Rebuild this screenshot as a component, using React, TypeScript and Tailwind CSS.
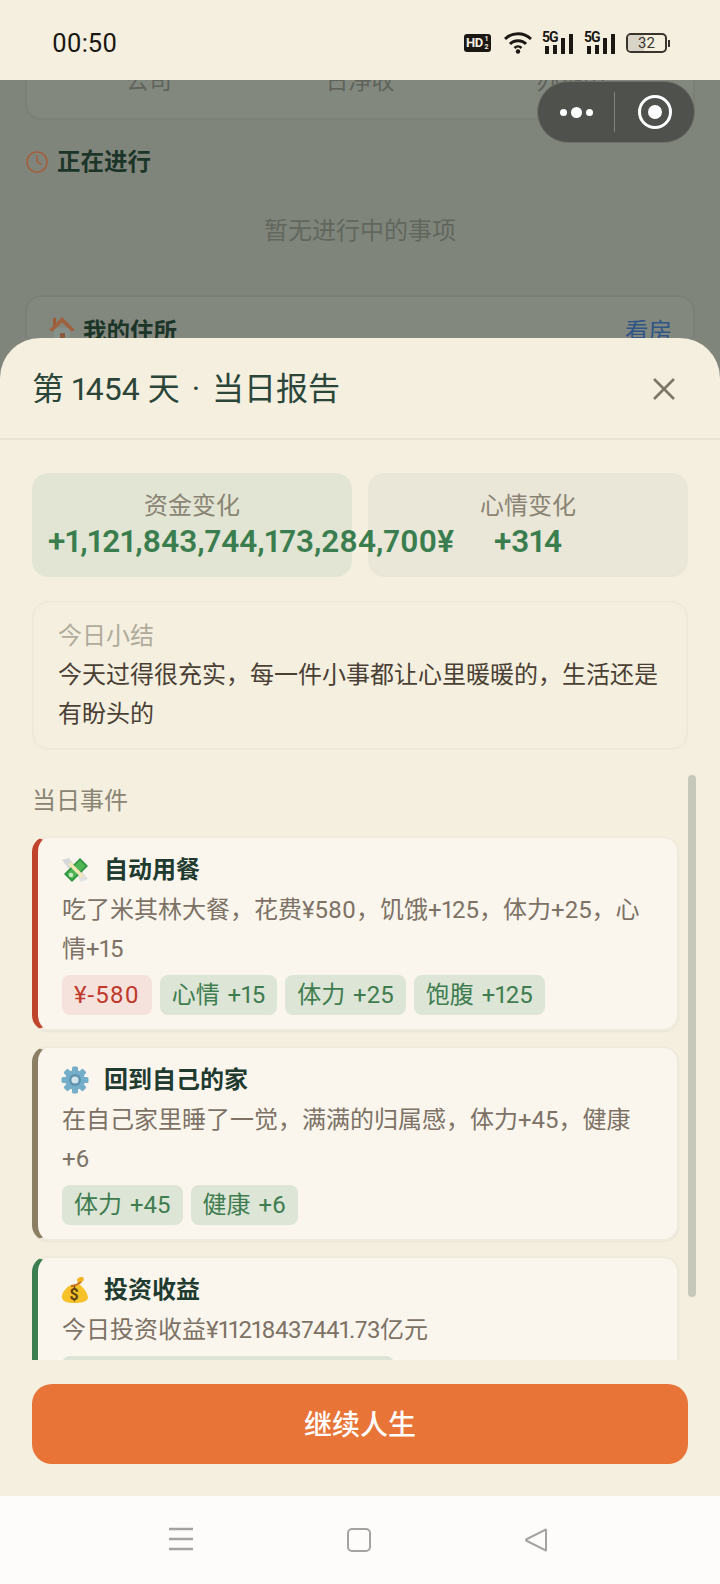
import { Clock } from 'lucide-react'

type Tag = { label: string; tone: 'good' | 'bad'; extra?: string }

interface EventItem {
  icon: React.ReactNode
  title: string
  desc: React.ReactNode
  bar: string
  tags: Tag[]
}

function MoneyWings() {
  return (
    <svg viewBox="0 0 28 28" className="w-[28px] h-[28px]">
      <path d="M1 4 L8 2 L14 10 L8 13 Z" fill="#d5d9d9" />
      <path d="M15 18 L21 15 L27 23 L20 26 Z" fill="#dfe2e2" />
      <path d="M19 2 L27 10 L11 26 L3 18 Z" fill="#2f9440" />
      <path d="M19 4.5 L24.5 10 L11 23.5 L5.5 18 Z" fill="#4fb455" />
      <path d="M7 8.5 L9.5 6 L23 19.5 L20.5 22 Z" fill="#f3e7b8" />
      <circle cx="10" cy="19" r="2.2" fill="#c9ecc4" />
    </svg>
  )
}

function Gear() {
  return (
    <svg viewBox="0 0 28 28" className="w-[28px] h-[28px]">
      <g fill="#75aeca">
        <circle cx="14" cy="14" r="10" />
        <rect x="11" y="0.5" width="6" height="27" rx="1.5" />
        <rect x="11" y="0.5" width="6" height="27" rx="1.5" transform="rotate(45 14 14)" />
        <rect x="11" y="0.5" width="6" height="27" rx="1.5" transform="rotate(90 14 14)" />
        <rect x="11" y="0.5" width="6" height="27" rx="1.5" transform="rotate(135 14 14)" />
      </g>
      <circle cx="14" cy="14" r="6" fill="#5d93ae" />
      <circle cx="14" cy="14" r="3.6" fill="#d5e4ea" />
    </svg>
  )
}

function MoneyBag() {
  return (
    <svg viewBox="0 0 28 28" className="w-[28px] h-[28px]">
      <path d="M10 9 C4 12 0 18 1 22 C2 26 7 27 13 27 C20 27 26 26 27 22 C27 17 22 11 18 8 Z" fill="#f7c12a" />
      <path d="M17 8 L16 3 L19 1 L22 1 L23 4 L20 7 Z" fill="#f2b51e" />
      <path d="M10 10 C13 10 17 8 20 6" fill="none" stroke="#c9701c" strokeWidth="2" />
      <text x="8.5" y="24" fontSize="16" fontWeight="700" fill="#5f4312" fontFamily="Roboto, sans-serif">$</text>
    </svg>
  )
}

function House() {
  return (
    <svg viewBox="0 0 28 28" className="w-[28px] h-[28px]">
      <rect x="6" y="12" width="16" height="15" fill="#85918a" />
      <rect x="5" y="2" width="3" height="7" fill="#9c5a35" />
      <path d="M14 1 L27 14 L23.5 15.5 L14 6.5 L4.5 15.5 L1 14 Z" fill="#a0613f" />
      <rect x="12" y="17" width="5" height="10" fill="#8a5a3a" />
    </svg>
  )
}

function Signal() {
  return (
    <div className="relative w-[32px] h-[22px]">
      <span className="absolute left-0 -top-[3px] text-[14px] leading-[16px] font-bold text-[#1b1712] tracking-[-1px]">5G</span>
      <div className="absolute left-[3px] bottom-0 flex items-end gap-[4px]">
        <div className="w-[4px] h-[8px] bg-[#1b1712]" />
        <div className="w-[4px] h-[9px] bg-[#1b1712]" />
        <div className="w-[4px] h-[16px] bg-[#1b1712]" />
        <div className="w-[4px] h-[20px] bg-[#1b1712]" />
      </div>
    </div>
  )
}

const events: EventItem[] = [
  {
    icon: <MoneyWings />,
    title: '自动用餐',
    desc: '吃了米其林大餐，花费¥580，饥饿+125，体力+25，心情+15',
    bar: 'border-l-[#c0432b]',
    tags: [
      { label: '¥-580', tone: 'bad', extra: 'tracking-[1px]' },
      { label: '心情 +15', tone: 'good' },
      { label: '体力 +25', tone: 'good' },
      { label: '饱腹 +125', tone: 'good' },
    ],
  },
  {
    icon: <Gear />,
    title: '回到自己的家',
    desc: '在自己家里睡了一觉，满满的归属感，体力+45，健康+6',
    bar: 'border-l-[#8a7f62]',
    tags: [
      { label: '体力 +45', tone: 'good' },
      { label: '健康 +6', tone: 'good' },
    ],
  },
  {
    icon: <MoneyBag />,
    title: '投资收益',
    desc: (
      <>
        今日投资收益¥<span className="tracking-[-0.45px]">11218437441.73</span>亿元
      </>
    ),
    bar: 'border-l-[#3a7d4f]',
    tags: [{ label: '¥+1,121,843,744,173,284,700', tone: 'good', extra: 'tracking-[0.4px]' }],
  },
]

function EventCard({ item }: { item: EventItem }) {
  return (
    <div className={`w-[647px] rounded-[16px] border-2 border-[#efeadc] border-l-[6px] bg-[#faf6ee] shadow-[0_1px_2px_rgba(0,0,0,0.05)] pl-[24px] pr-[24px] py-[14px] ${item.bar}`}>
      <div className="flex items-center h-[36px]">
        <div className="w-[43px] -ml-[1px]">{item.icon}</div>
        <h3 className="text-[24px] leading-[36px] font-bold text-[#1f3a2e]">{item.title}</h3>
      </div>
      <p className="mt-[3px] text-[24px] leading-[39px] text-[#7d7265]">{item.desc}</p>
      <div className="mt-[6px] flex gap-[8px]">
        {item.tags.map((t) => (
          <span
            key={t.label}
            className={`h-[40px] px-[12px] rounded-[8px] text-[24px] leading-[40px] [word-spacing:2px] whitespace-nowrap ${
              t.tone === 'bad' ? 'bg-[#f5e2dc] text-[#c0392b]' : 'bg-[#dde5d6] text-[#3f7d50]'
            } ${t.extra ?? ''}`}
          >
            {t.label}
          </span>
        ))}
      </div>
    </div>
  )
}

export default function App() {
  return (
    <div className="w-[720px] h-[1584px] relative overflow-hidden bg-[#80857b] proportional-nums font-[Roboto,'Noto_Sans_CJK_SC',sans-serif]">
      {/* Status bar */}
      <div className="h-[80px] pt-[6px] flex items-center justify-between pl-[52px] pr-[50px] bg-[#f5efe0]">
        <span className="text-[25.5px] leading-[30px] text-[#1b1712]">00:50</span>
        <div className="flex items-center">
          <div className="w-[27px] h-[18px] rounded-[3px] bg-[#1b1712] text-[#f5efe0] text-[13px] leading-[18px] font-bold pl-[2px] tracking-[-0.5px] flex">
            HD<span className="text-[7px] leading-[8px] ml-[1px] mt-[1px] w-[5px] text-center">1 2</span>
          </div>
          <svg viewBox="0 0 28 22" className="w-[28px] h-[22px] ml-[13px]">
            <path d="M1 7 C8 0 20 0 27 7" fill="none" stroke="#1b1712" strokeWidth="3" />
            <path d="M6 12 C10 7.5 18 7.5 22 12" fill="none" stroke="#1b1712" strokeWidth="3" />
            <path d="M10.5 16 C12.5 14 15.5 14 17.5 16" fill="none" stroke="#1b1712" strokeWidth="2.5" />
            <circle cx="14" cy="19.5" r="2.2" fill="#1b1712" />
          </svg>
          <div className="ml-[10px]">
            <Signal />
          </div>
          <div className="ml-[10px]">
            <Signal />
          </div>
          <div className="ml-[10px] flex items-center">
            <div className="relative w-[41px] h-[20px] rounded-[5px] border-2 border-[#3a352c] overflow-hidden">
              <div className="absolute left-0 top-0 bottom-0 w-[16px] bg-[#d9d4c8]" />
              <span className="absolute inset-0 text-center text-[15px] leading-[17px] text-[#3a352c]">32</span>
            </div>
            <div className="w-[2px] h-[7px] ml-[1px] bg-[#3a352c]" />
          </div>
        </div>
      </div>

      {/* Dimmed page behind the sheet */}
      <div className="h-[258px] overflow-hidden">
        <div className="-mt-[40px] mx-[25px] h-[80px] rounded-b-[16px] bg-[#83887e] border-2 border-[#7b8077] px-[16px] pt-[22px] grid grid-cols-3 text-center text-[23px] leading-[36px] text-[#5f635a]">
          <span>公司</span>
          <span>日净收</span>
          <span>办证中</span>
        </div>
        <div className="mt-[24px] mx-[25px] flex items-center h-[36px]">
          <Clock size={24} strokeWidth={1.6} className="text-[#a3603f]" />
          <span className="ml-[8px] text-[23.5px] leading-[36px] font-bold text-[#1c3529]">正在进行</span>
        </div>
        <p className="mt-[33px] text-center text-[24px] leading-[36px] text-[#62675e]">暂无进行中的事项</p>
        <div className="mt-[46px] mx-[25px] h-[80px] rounded-[16px] bg-[#83887e] border-2 border-[#7b8077] px-[21px] pt-[17px] flex justify-between text-[23.5px] leading-[36px]">
          <div className="flex items-start">
            <div className="mt-[2px] mr-[7px]">
              <House />
            </div>
            <span className="font-bold text-[#1c3529]">我的住所</span>
          </div>
          <span className="text-[#2f5588]">看房</span>
        </div>
      </div>

      {/* Report sheet */}
      <div className="h-[1158px] rounded-t-[40px] bg-[#f5efe0] flex flex-col">
        <div className="h-[102px] shrink-0 border-b-2 border-[#e9e3d3] pt-[2px] pl-[32px] pr-[44px] flex items-center justify-between">
          <h2 className="text-[32px] leading-[44px] text-[#2b4538]">
            第 1454 天 <span className="mx-[4px]">·</span> 当日报告
          </h2>
          <svg viewBox="0 0 24 24" className="w-[24px] h-[24px] text-[#7d7767]">
            <path d="M2 2 L22 22 M22 2 L2 22" stroke="currentColor" strokeWidth="2.6" />
          </svg>
        </div>

        <div className="px-[32px] pt-[33px]">
          <div className="grid grid-cols-2 gap-[16px]">
            <div className="relative z-10 h-[104px] rounded-[16px] bg-[#e2e5d3] px-[16px] pt-[15px] text-center">
              <p className="text-[24px] leading-[36px] text-[#8a8474]">资金变化</p>
              <p className="text-[31.5px] leading-[36px] font-semibold text-[#3a7d4f] whitespace-nowrap">+1,121,843,744,173,284,700¥</p>
            </div>
            <div className="h-[104px] rounded-[16px] bg-[#eae7d9] px-[16px] pt-[15px] text-center">
              <p className="text-[24px] leading-[36px] text-[#8a8474]">心情变化</p>
              <p className="text-[31.5px] leading-[36px] font-semibold text-[#3a7d4f]">+314</p>
            </div>
          </div>

          <div className="mt-[24px] rounded-[16px] border-2 border-[#efe9d9] px-[24px] pt-[15px] pb-[14px]">
            <p className="text-[24px] leading-[36px] text-[#b0ab9b]">今日小结</p>
            <p className="mt-[2px] text-[24px] leading-[39px] text-[#4a3f34]">今天过得很充实，每一件小事都让心里暖暖的，生活还是有盼头的</p>
          </div>

          <div className="mt-[25px] w-[664px] h-[585px] relative overflow-hidden">
            <p className="pt-[8px] text-[24px] leading-[36px] text-[#8a8474]">当日事件</p>
            <div className="mt-[17px] flex flex-col gap-[15px]">
              {events.map((e) => (
                <EventCard key={e.title} item={e} />
              ))}
            </div>
            <div className="absolute left-[656px] top-0 w-[8px] h-[522px] rounded-full bg-[#c6c9b9]" />
          </div>

          <button className="mt-[24px] w-full h-[80px] pt-[4px] rounded-[20px] bg-[#e87438] text-white text-[28px] font-medium">继续人生</button>
        </div>
      </div>

      {/* Nav bar */}
      <div className="h-[88px] bg-[#fdfcfa] relative">
        <svg viewBox="0 0 26 24" className="absolute left-[168px] top-[31px] w-[26px] h-[24px] text-[#a3a3a3]">
          <path d="M1 2 H25 M1 12 H25 M1 22 H25" stroke="currentColor" strokeWidth="2.4" />
        </svg>
        <div className="absolute left-[347px] top-[32px] w-[24px] h-[24px] rounded-[5px] border-2 border-[#a3a3a3]" />
        <svg viewBox="0 0 24 24" className="absolute left-[524px] top-[32px] w-[24px] h-[24px] text-[#a3a3a3]">
          <path d="M22 2 V22 Q22 23 21 22 L3 13 Q1 12 3 11 L21 2 Q22 1 22 2 Z" fill="none" stroke="currentColor" strokeWidth="2" />
        </svg>
      </div>

      {/* Mini program capsule */}
      <div className="absolute left-[537px] top-[81px] w-[158px] h-[62px] rounded-full bg-[#4f524c] border border-[#6d716a] flex items-center">
        <div className="w-[76px] flex items-center justify-center gap-[4px]">
          <span className="w-[7px] h-[7px] rounded-full bg-white" />
          <span className="w-[11px] h-[11px] rounded-full bg-white" />
          <span className="w-[7px] h-[7px] rounded-full bg-white" />
        </div>
        <div className="w-px h-[40px] bg-[#83867f]" />
        <div className="flex-1 flex justify-center">
          <div className="w-[34px] h-[34px] rounded-full border-[3px] border-white flex items-center justify-center">
            <span className="w-[14px] h-[14px] rounded-full bg-white" />
          </div>
        </div>
      </div>
    </div>
  )
}
